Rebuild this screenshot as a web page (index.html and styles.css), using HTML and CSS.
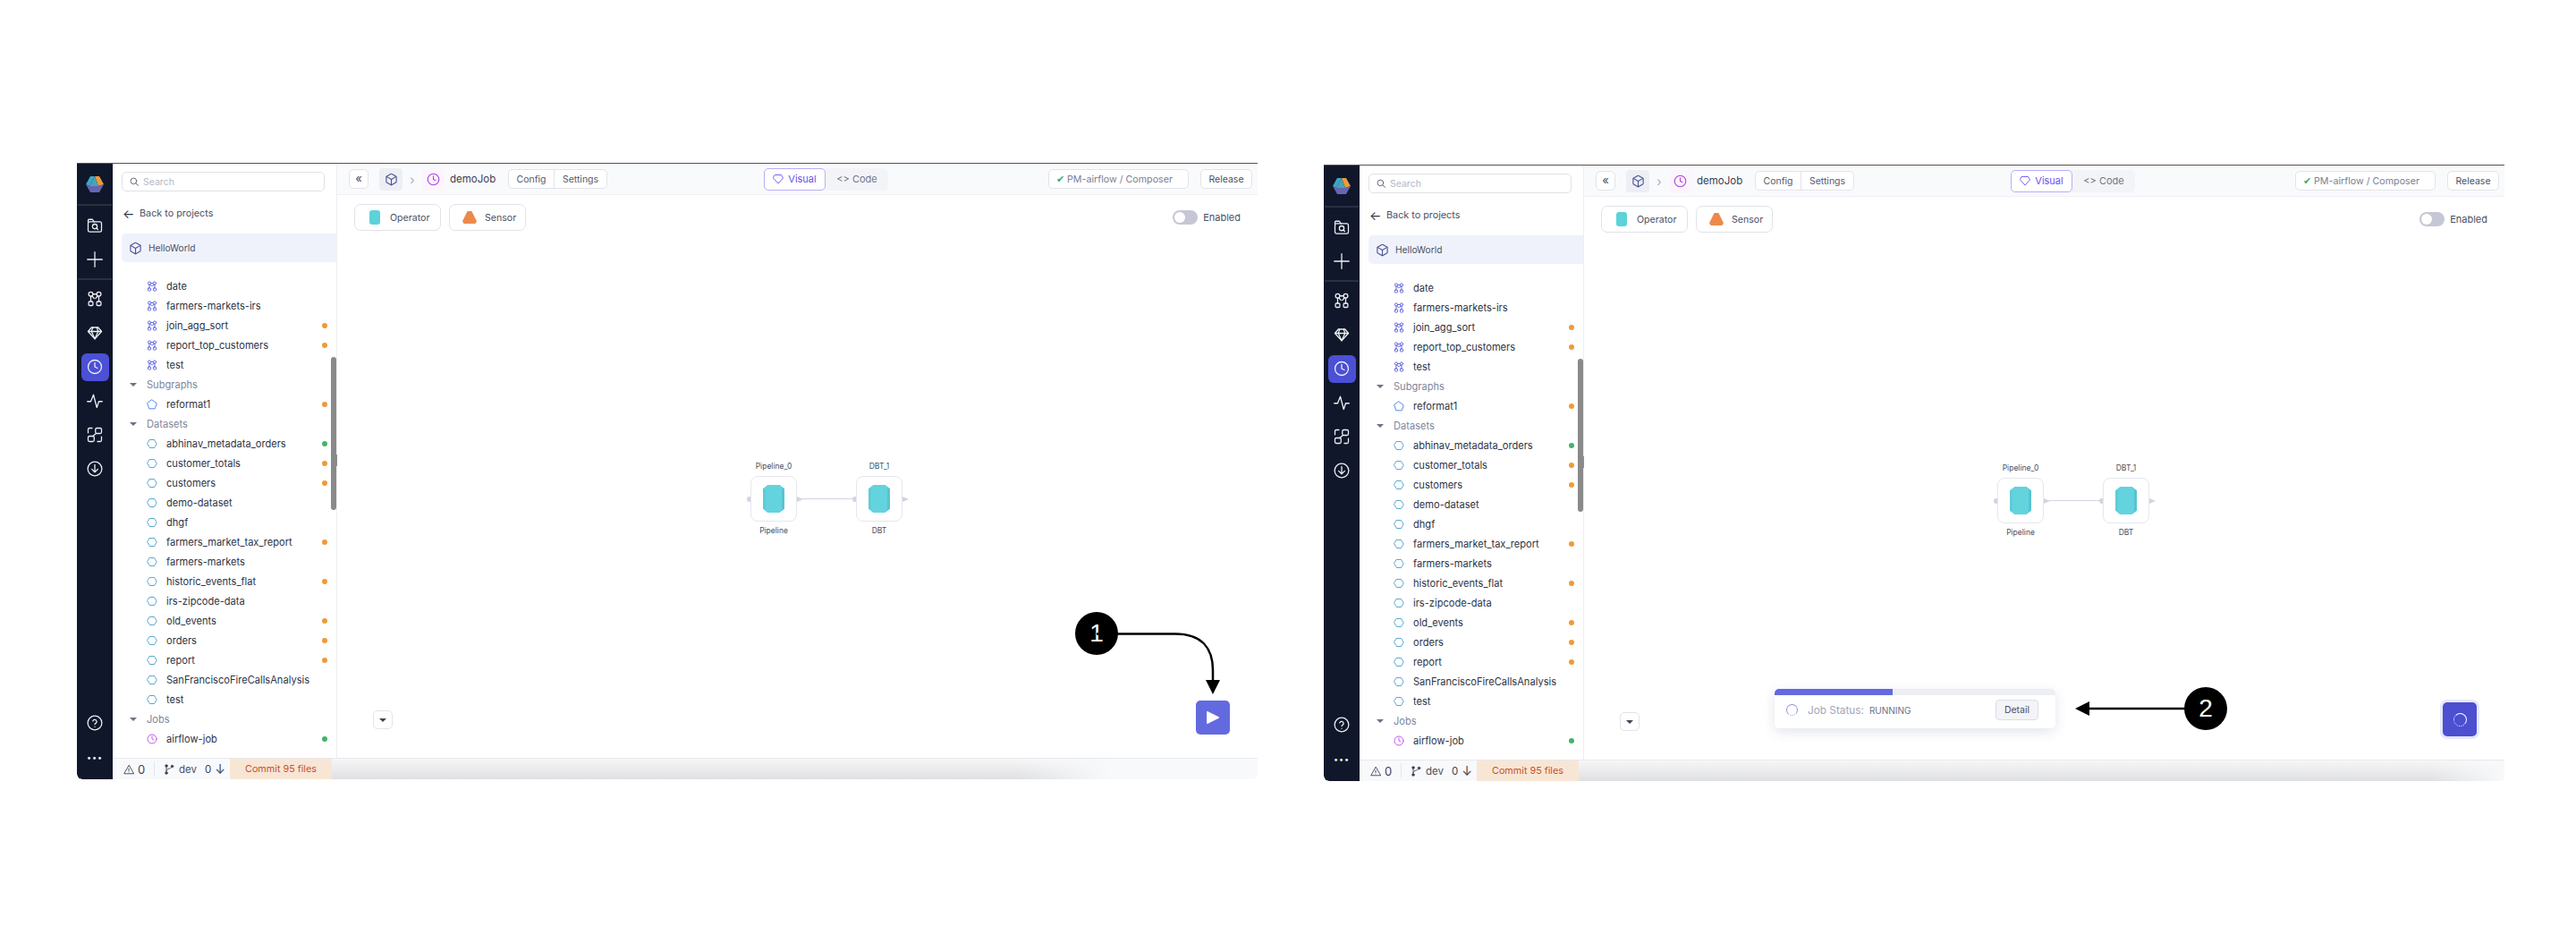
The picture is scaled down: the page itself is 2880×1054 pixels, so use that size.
FILE: index.html
```html
<!DOCTYPE html>
<html lang="en">
<head>
<meta charset="utf-8">
<title>Run job</title>
<link rel="stylesheet" href="styles.css">
</head>
<body>
<svg class="defs" width="0" height="0" aria-hidden="true">
  <symbol id="i-box" viewBox="0 0 24 24"><path d="M21 8a2 2 0 0 0-1-1.73l-7-4a2 2 0 0 0-2 0l-7 4A2 2 0 0 0 3 8v8a2 2 0 0 0 1 1.73l7 4a2 2 0 0 0 2 0l7-4A2 2 0 0 0 21 16Z"/><path d="m3.3 7 8.7 5 8.7-5"/><path d="M12 22V12"/></symbol>
  <symbol id="i-clock" viewBox="0 0 24 24"><circle cx="12" cy="12" r="10"/><path d="M12 6v6l4 2"/></symbol>
  <symbol id="i-pipe" viewBox="0 0 24 24"><circle cx="6" cy="5" r="3.2"/><circle cx="18" cy="5" r="3.2"/><rect x="2.8" y="16" width="6.4" height="6" rx="1.5"/><rect x="14.8" y="16" width="6.4" height="6" rx="1.5"/><path d="M9.2 5h5.6M6 8.2V16M18 8.2V16M8 8l3 3.500M16 8l-3 3.500"/></symbol>
  <symbol id="i-hex" viewBox="0 0 24 24"><path d="M7 3h10l5.500 9-5.500 9H7l-5.500-9z" stroke-linejoin="round"/></symbol>
  <symbol id="i-pent" viewBox="0 0 24 24"><path d="M12 2l10.500 7.600-4 12H5.500l-4-12z" stroke-linejoin="round"/></symbol>
  <symbol id="i-folder" viewBox="0 0 24 24"><path d="M2 7V4.500A1.500 1.500 0 0 1 3.500 3h5l2.500 3.500"/><rect x="2" y="6.500" width="20" height="15" rx="2.500"/><circle cx="12" cy="13.500" r="3.500"/><path d="m14.500 16 2 2"/></symbol>
  <symbol id="i-plus" viewBox="0 0 24 24"><path d="M12 1v22M1 12h22"/></symbol>
  <symbol id="i-gem" viewBox="0 0 24 24"><path d="M7 4h10l5 6-10 11L2 10z"/><path d="M2 10h20M9 4l-2 6 5 11 5-11-2-6"/></symbol>
  <symbol id="i-pulse" viewBox="0 0 24 24"><path d="M1 13h5l4-10 5 19 3-9h5"/></symbol>
  <symbol id="i-trans" viewBox="0 0 24 24"><rect x="13" y="2" width="9" height="8" rx="2"/><rect x="2" y="14" width="9" height="8" rx="2"/><path d="M2 9V4a2 2 0 0 1 2-2h4M22 15v5a2 2 0 0 1-2 2h-4M9 14l5-4"/></symbol>
  <symbol id="i-down" viewBox="0 0 24 24"><circle cx="12" cy="12" r="10.500"/><path d="M12 6v11M7.500 12.500 12 17l4.500-4.500"/></symbol>
  <symbol id="i-help" viewBox="0 0 24 24"><circle cx="12" cy="12" r="10.500"/><path d="M9 9.200a3 3 0 0 1 5.800 1c0 2-2.800 2.500-2.800 3.800"/><path d="M12 17.500h.01"/></symbol>
  <symbol id="i-search" viewBox="0 0 24 24"><circle cx="10.500" cy="10.500" r="8"/><path d="m16.500 16.500 6 6"/></symbol>
  <symbol id="i-warn" viewBox="0 0 24 24"><path d="M12 3 1.500 21.500h21z" stroke-linejoin="round"/><path d="M12 10v5M12 18h.01"/></symbol>
  <symbol id="i-branch" viewBox="0 0 24 24"><circle cx="6" cy="4" r="2.500" fill="currentColor"/><circle cx="6" cy="20" r="2.500" fill="currentColor"/><circle cx="19" cy="5" r="2.500" fill="currentColor"/><path d="M6 4v16M19 5c0 6-13 4-13 10"/></symbol>
  <symbol id="i-logo" viewBox="0 0 20 20"><path d="M5 1h5L4 12 0 10z" fill="#3fa6c8"/><path d="M10 1h5l5 9-6 2z" fill="#ef9a3a"/><path d="M10 1l4 11H4z" fill="#4aa3b5"/><path d="M0 10l4 2h10l6-2-5 9H5z" fill="#6466b4"/></symbol>
</svg>

<section class="window">
  <nav class="rail">
    <div class="rail-logo"><svg class="logo"><use href="#i-logo"/></svg></div>
    <div class="rail-item"><svg class="ico"><use href="#i-folder"/></svg></div>
    <div class="rail-item rail-last"><svg class="ico"><use href="#i-plus"/></svg></div>
    <div class="rail-item"><svg class="ico"><use href="#i-pipe"/></svg></div>
    <div class="rail-item"><svg class="ico"><use href="#i-gem"/></svg></div>
    <div class="rail-item rail-on"><span class="rail-tile"><svg class="ico"><use href="#i-clock"/></svg></span></div>
    <div class="rail-item"><svg class="ico"><use href="#i-pulse"/></svg></div>
    <div class="rail-item"><svg class="ico"><use href="#i-trans"/></svg></div>
    <div class="rail-item"><svg class="ico"><use href="#i-down"/></svg></div>
    <div class="rail-item rail-help"><svg class="ico"><use href="#i-help"/></svg></div>
    <div class="rail-item rail-dots">•••</div>
  </nav>
  <div class="body">
    <div class="work">
      <aside class="panel">
        <div class="search"><svg class="s-ico"><use href="#i-search"/></svg>Search</div>
        <div class="back"><span class="back-arrow">←</span>Back to projects</div>
        <div class="project"><svg class="p-ico"><use href="#i-box"/></svg>HelloWorld</div>
        <div class="tree">
          <div class="row"><svg class="t-ico c-pipe"><use href="#i-pipe"/></svg>date</div>
          <div class="row"><svg class="t-ico c-pipe"><use href="#i-pipe"/></svg>farmers-markets-irs</div>
          <div class="row"><svg class="t-ico c-pipe"><use href="#i-pipe"/></svg>join_agg_sort<i class="dot orange"></i></div>
          <div class="row"><svg class="t-ico c-pipe"><use href="#i-pipe"/></svg>report_top_customers<i class="dot orange"></i></div>
          <div class="row"><svg class="t-ico c-pipe"><use href="#i-pipe"/></svg>test</div>
          <div class="row head"><i class="caret"></i>Subgraphs</div>
          <div class="row"><svg class="t-ico c-sub"><use href="#i-pent"/></svg>reformat1<i class="dot orange"></i></div>
          <div class="row head"><i class="caret"></i>Datasets</div>
          <div class="row"><svg class="t-ico c-data"><use href="#i-hex"/></svg>abhinav_metadata_orders<i class="dot green"></i></div>
          <div class="row"><svg class="t-ico c-data"><use href="#i-hex"/></svg>customer_totals<i class="dot orange"></i></div>
          <div class="row"><svg class="t-ico c-data"><use href="#i-hex"/></svg>customers<i class="dot orange"></i></div>
          <div class="row"><svg class="t-ico c-data"><use href="#i-hex"/></svg>demo-dataset</div>
          <div class="row"><svg class="t-ico c-data"><use href="#i-hex"/></svg>dhgf</div>
          <div class="row"><svg class="t-ico c-data"><use href="#i-hex"/></svg>farmers_market_tax_report<i class="dot orange"></i></div>
          <div class="row"><svg class="t-ico c-data"><use href="#i-hex"/></svg>farmers-markets</div>
          <div class="row"><svg class="t-ico c-data"><use href="#i-hex"/></svg>historic_events_flat<i class="dot orange"></i></div>
          <div class="row"><svg class="t-ico c-data"><use href="#i-hex"/></svg>irs-zipcode-data</div>
          <div class="row"><svg class="t-ico c-data"><use href="#i-hex"/></svg>old_events<i class="dot orange"></i></div>
          <div class="row"><svg class="t-ico c-data"><use href="#i-hex"/></svg>orders<i class="dot orange"></i></div>
          <div class="row"><svg class="t-ico c-data"><use href="#i-hex"/></svg>report<i class="dot orange"></i></div>
          <div class="row"><svg class="t-ico c-data"><use href="#i-hex"/></svg>SanFranciscoFireCallsAnalysis</div>
          <div class="row"><svg class="t-ico c-data"><use href="#i-hex"/></svg>test</div>
          <div class="row head"><i class="caret"></i>Jobs</div>
          <div class="row"><svg class="t-ico c-job"><use href="#i-clock"/></svg>airflow-job<i class="dot green"></i></div>
        </div>
        <div class="scrollbar"></div>
        <div class="splitter"></div>
      </aside>
      <main class="main">
        <header class="topbar">
          <div class="collapse">«</div>
          <div class="tile tile-box"><svg class="tile-ico"><use href="#i-box"/></svg></div>
          <div class="crumb">›</div>
          <div class="tile tile-job"><svg class="tile-ico"><use href="#i-clock"/></svg></div>
          <div class="job-name">demoJob</div>
          <div class="seg"><span class="seg-a">Config</span><span class="seg-b">Settings</span></div>
          <div class="tabs"><span class="tab-on"><svg class="tab-gem" viewBox="0 0 24 24"><path d="M5 3h14l4 7-11 12L1 10z"/></svg>Visual</span><span class="tab-off">&lt;&gt;&nbsp;Code</span></div>
          <div class="fabric"><span class="check">✔</span>PM-airflow / Composer</div>
          <div class="release">Release</div>
        </header>
        <div class="toolbar">
          <div class="tool"><i class="op-ico"></i>Operator</div>
          <div class="tool tool-s"><i class="sn-ico"></i>Sensor</div>
          <div class="enabled"><i class="toggle"></i>Enabled</div>
        </div>
        <div class="node n1"><div class="n-top">Pipeline_0</div><div class="n-box"><i class="gem"></i></div><div class="n-bot">Pipeline</div><i class="port-l"></i><i class="port-r"></i></div>
        <div class="link"></div>
        <div class="node n2"><div class="n-top">DBT_1</div><div class="n-box"><i class="gem"></i></div><div class="n-bot">DBT</div><i class="port-l"></i><i class="port-r"></i></div>
        <div class="drop"><i class="caret dark"></i></div>
        <div class="play"><svg class="play-ico" viewBox="0 0 16 16"><path d="M2 1.500 15 8 2 14.500z" stroke-linejoin="round"/></svg></div>
      </main>
    </div>
    <footer class="footer">
      <div class="f-warn"><svg class="f-ico"><use href="#i-warn"/></svg><span class="f-num">0</span></div>
      <div class="f-git"><svg class="f-ico"><use href="#i-branch"/></svg><span class="f-dev">dev</span><span class="f-zero">0</span><span class="f-arrow">↓</span></div>
      <div class="commit">Commit 95 files</div>
      <div class="f-rest"></div>
    </footer>
  </div>
</section>

<section class="window second">
  <nav class="rail">
    <div class="rail-logo"><svg class="logo"><use href="#i-logo"/></svg></div>
    <div class="rail-item"><svg class="ico"><use href="#i-folder"/></svg></div>
    <div class="rail-item rail-last"><svg class="ico"><use href="#i-plus"/></svg></div>
    <div class="rail-item"><svg class="ico"><use href="#i-pipe"/></svg></div>
    <div class="rail-item"><svg class="ico"><use href="#i-gem"/></svg></div>
    <div class="rail-item rail-on"><span class="rail-tile"><svg class="ico"><use href="#i-clock"/></svg></span></div>
    <div class="rail-item"><svg class="ico"><use href="#i-pulse"/></svg></div>
    <div class="rail-item"><svg class="ico"><use href="#i-trans"/></svg></div>
    <div class="rail-item"><svg class="ico"><use href="#i-down"/></svg></div>
    <div class="rail-item rail-help"><svg class="ico"><use href="#i-help"/></svg></div>
    <div class="rail-item rail-dots">•••</div>
  </nav>
  <div class="body">
    <div class="work">
      <aside class="panel">
        <div class="search"><svg class="s-ico"><use href="#i-search"/></svg>Search</div>
        <div class="back"><span class="back-arrow">←</span>Back to projects</div>
        <div class="project"><svg class="p-ico"><use href="#i-box"/></svg>HelloWorld</div>
        <div class="tree">
          <div class="row"><svg class="t-ico c-pipe"><use href="#i-pipe"/></svg>date</div>
          <div class="row"><svg class="t-ico c-pipe"><use href="#i-pipe"/></svg>farmers-markets-irs</div>
          <div class="row"><svg class="t-ico c-pipe"><use href="#i-pipe"/></svg>join_agg_sort<i class="dot orange"></i></div>
          <div class="row"><svg class="t-ico c-pipe"><use href="#i-pipe"/></svg>report_top_customers<i class="dot orange"></i></div>
          <div class="row"><svg class="t-ico c-pipe"><use href="#i-pipe"/></svg>test</div>
          <div class="row head"><i class="caret"></i>Subgraphs</div>
          <div class="row"><svg class="t-ico c-sub"><use href="#i-pent"/></svg>reformat1<i class="dot orange"></i></div>
          <div class="row head"><i class="caret"></i>Datasets</div>
          <div class="row"><svg class="t-ico c-data"><use href="#i-hex"/></svg>abhinav_metadata_orders<i class="dot green"></i></div>
          <div class="row"><svg class="t-ico c-data"><use href="#i-hex"/></svg>customer_totals<i class="dot orange"></i></div>
          <div class="row"><svg class="t-ico c-data"><use href="#i-hex"/></svg>customers<i class="dot orange"></i></div>
          <div class="row"><svg class="t-ico c-data"><use href="#i-hex"/></svg>demo-dataset</div>
          <div class="row"><svg class="t-ico c-data"><use href="#i-hex"/></svg>dhgf</div>
          <div class="row"><svg class="t-ico c-data"><use href="#i-hex"/></svg>farmers_market_tax_report<i class="dot orange"></i></div>
          <div class="row"><svg class="t-ico c-data"><use href="#i-hex"/></svg>farmers-markets</div>
          <div class="row"><svg class="t-ico c-data"><use href="#i-hex"/></svg>historic_events_flat<i class="dot orange"></i></div>
          <div class="row"><svg class="t-ico c-data"><use href="#i-hex"/></svg>irs-zipcode-data</div>
          <div class="row"><svg class="t-ico c-data"><use href="#i-hex"/></svg>old_events<i class="dot orange"></i></div>
          <div class="row"><svg class="t-ico c-data"><use href="#i-hex"/></svg>orders<i class="dot orange"></i></div>
          <div class="row"><svg class="t-ico c-data"><use href="#i-hex"/></svg>report<i class="dot orange"></i></div>
          <div class="row"><svg class="t-ico c-data"><use href="#i-hex"/></svg>SanFranciscoFireCallsAnalysis</div>
          <div class="row"><svg class="t-ico c-data"><use href="#i-hex"/></svg>test</div>
          <div class="row head"><i class="caret"></i>Jobs</div>
          <div class="row"><svg class="t-ico c-job"><use href="#i-clock"/></svg>airflow-job<i class="dot green"></i></div>
        </div>
        <div class="scrollbar"></div>
        <div class="splitter"></div>
      </aside>
      <main class="main">
        <header class="topbar">
          <div class="collapse">«</div>
          <div class="tile tile-box"><svg class="tile-ico"><use href="#i-box"/></svg></div>
          <div class="crumb">›</div>
          <div class="tile tile-job"><svg class="tile-ico"><use href="#i-clock"/></svg></div>
          <div class="job-name">demoJob</div>
          <div class="seg"><span class="seg-a">Config</span><span class="seg-b">Settings</span></div>
          <div class="tabs"><span class="tab-on"><svg class="tab-gem" viewBox="0 0 24 24"><path d="M5 3h14l4 7-11 12L1 10z"/></svg>Visual</span><span class="tab-off">&lt;&gt;&nbsp;Code</span></div>
          <div class="fabric"><span class="check">✔</span>PM-airflow / Composer</div>
          <div class="release">Release</div>
        </header>
        <div class="toolbar">
          <div class="tool"><i class="op-ico"></i>Operator</div>
          <div class="tool tool-s"><i class="sn-ico"></i>Sensor</div>
          <div class="enabled"><i class="toggle"></i>Enabled</div>
        </div>
        <div class="node n1"><div class="n-top">Pipeline_0</div><div class="n-box"><i class="gem"></i></div><div class="n-bot">Pipeline</div><i class="port-l"></i><i class="port-r"></i></div>
        <div class="link"></div>
        <div class="node n2"><div class="n-top">DBT_1</div><div class="n-box"><i class="gem"></i></div><div class="n-bot">DBT</div><i class="port-l"></i><i class="port-r"></i></div>
        <div class="drop"><i class="caret dark"></i></div>
        <div class="status">
          <div class="progress"><div class="progress-fill"></div></div>
          <div class="status-row"><i class="spin spin-blue"></i><span class="status-k">Job Status:</span><span class="status-v">RUNNING</span><span class="detail">Detail</span></div>
        </div>
        <div class="play running"><i class="spin spin-white"></i></div>
      </main>
    </div>
    <footer class="footer">
      <div class="f-warn"><svg class="f-ico"><use href="#i-warn"/></svg><span class="f-num">0</span></div>
      <div class="f-git"><svg class="f-ico"><use href="#i-branch"/></svg><span class="f-dev">dev</span><span class="f-zero">0</span><span class="f-arrow">↓</span></div>
      <div class="commit">Commit 95 files</div>
      <div class="f-rest full"></div>
    </footer>
  </div>
</section>

<div class="callout c1">1</div>
<svg class="arrow a1" viewBox="0 0 140 72"><path class="arrow-line" d="M0 1.500H88C118 1.500 130 18 130 42V56"/><path d="M122 53h16l-8 16z"/></svg>
<div class="callout c2">2</div>
<svg class="arrow a2" viewBox="0 0 124 18"><path class="arrow-line" d="M124 9H12"/><path d="M16 1v16L0 9z"/></svg>
</body>
</html>
```

FILE: styles.css
```css
* { box-sizing: border-box; }
html, body { margin: 0; height: 1054px; overflow: hidden; background: #fff; }
body {
  position: relative;
  display: flex;
  align-items: flex-start;
  gap: 74px;
  padding: 182px 0 0 86px;
  font-family: Inter, "Liberation Sans", sans-serif;
  font-size: 11px;
  color: #2d3345;
  -webkit-font-smoothing: antialiased;
}
.defs { position: absolute; }
svg { fill: none; stroke: currentColor; stroke-width: 1.8; stroke-linecap: round; stroke-linejoin: round; }
i { font-style: normal; display: block; }

.window {
  flex: none;
  width: 1320px;
  height: 689px;
  display: flex;
  border-top: 1px solid #5c5050;
  border-radius: 0 0 6px 6px;
  overflow: hidden;
}
.second { margin-top: 2px; }

/* Rail */
.rail {
  flex: none;
  width: 40px;
  background: #10172a;
  color: #eef0f4;
  display: flex;
  flex-direction: column;
  border-bottom-left-radius: 6px;
}
.rail-logo { height: 47px; display: flex; align-items: center; justify-content: center; border-bottom: 2px solid #2a3040; margin: 0 1px 3px; }
.logo { width: 20px; height: 20px; stroke: none; }
.logo use { stroke: none; }
.rail-item { height: 38px; flex: none; display: flex; align-items: center; justify-content: center; }
.rail-last { border-bottom: 0; margin-bottom: 6px; position: relative; }
.rail-last::after { content: ""; position: absolute; left: 1px; right: 1px; bottom: -4px; height: 2px; background: #2a3040; }
.ico { width: 18px; height: 18px; stroke-width: 1.7; }
.rail-tile { width: 31px; height: 31px; border-radius: 6px; background: #4b50d6; display: flex; align-items: center; justify-content: center; }
.rail-help { margin-top: auto; }
.rail-dots { font-size: 9px; letter-spacing: 1px; margin-bottom: 6px; }

/* Body */
.body { flex: 1; min-width: 0; display: flex; flex-direction: column; }
.work { flex: 1; min-height: 0; display: flex; }

/* Panel */
.panel {
  position: relative;
  flex: none;
  width: 251px;
  padding: 9px 10px 0 10px;
  background: #fff;
  border-right: 1px solid #eceef2;
}
.search {
  height: 22px;
  margin-right: 3px;
  display: flex;
  align-items: center;
  border: 1px solid #dfe1e8;
  border-radius: 5px;
  padding-left: 8px;
  font-size: 10.500px;
  color: #b4b8c6;
}
.s-ico { width: 10px; height: 10px; color: #555b6e; margin-right: 5px; stroke-width: 2.200; }
.back { height: 22px; margin-top: 13px; display: flex; align-items: center; color: #4a5065; font-size: 10.800px; }
.back-arrow { width: 20px; padding-left: 1px; font-size: 14px; color: #2d3345; }
.project {
  height: 32px;
  margin: 12px -10px 0 0;
  padding-left: 8px;
  display: flex;
  align-items: center;
  background: #f0f2fb;
  border-radius: 5px 0 0 5px;
  color: #4a5065;
  font-size: 10.200px;
}
.p-ico { width: 15px; height: 15px; margin-right: 7px; color: #4c5595; }
.tree { margin-top: 16px; }
.row { height: 22px; padding-left: 28px; display: flex; align-items: center; white-space: nowrap; color: #2d3345; font-size: 11.100px; }
.t-ico { width: 12px; height: 12px; margin-right: 10px; flex: none; stroke-width: 1.900; }
.c-pipe { color: #5b61e0; }
.c-sub { color: #4f82f0; }
.c-data { color: #4fa3cc; }
.c-job { color: #c452e8; }
.dot { width: 6px; height: 6px; border-radius: 50%; margin-left: auto; }
.orange { background: #ef9a3a; }
.green { background: #45b36b; }
.head { padding-left: 9px; color: #80869a; }
.caret { width: 0; height: 0; border-left: 4px solid transparent; border-right: 4px solid transparent; border-top: 4px solid #6b7186; margin-right: 11px; }
.caret.dark { border-top-color: #3f4456; margin: 0; }
.scrollbar { position: absolute; right: 0; top: 216px; width: 6px; height: 171px; border-radius: 3px; background: #8a8a8a; }
.splitter { position: absolute; right: -3px; top: 325px; width: 3px; height: 13px; background: #8c9099; }

/* Main */
.main { position: relative; flex: 1; min-width: 0; background: #fff; }
.topbar {
  height: 35px;
  display: flex;
  align-items: center;
  padding: 0 6px 0 13px;
  background: #f9fafc;
  border-bottom: 1px solid #eef0f4;
  font-size: 10.500px;
}
.collapse { width: 22px; height: 22px; border: 1px solid #e2e4ea; border-radius: 5px; background: #fff; display: flex; align-items: center; justify-content: center; font-size: 13px; line-height: 1; color: #4a5065; padding-bottom: 2px; }
.tile { width: 25px; height: 25px; border-radius: 4px; display: flex; align-items: center; justify-content: center; flex: none; }
.tile-box { margin-left: 12px; width: 26px; background: #edeff4; color: #4c5595; }
.tile-job { background: #fcf5fe; color: #b23fe0; }
.tile-ico { width: 15px; height: 15px; }
.crumb { width: 22px; text-align: center; color: #a9adba; font-size: 14px; }
.job-name { width: 49px; margin-left: 6px; font-size: 11.500px; color: #3a4052; white-space: nowrap; }
.seg { width: 111px; height: 22px; margin-left: 16px; display: flex; border: 1px solid #e2e4ea; border-radius: 5px; background: #fff; color: #555b6e; }
.seg span { display: flex; align-items: center; justify-content: center; }
.seg-a { width: 51px; border-right: 1px solid #e2e4ea; }
.seg-b { flex: 1; }
.tabs { width: 139px; height: 25px; margin-left: 175px; display: flex; background: #f3f4f8; border-radius: 5px; font-size: 11px; }
.tab-on { width: 69px; display: flex; align-items: center; justify-content: center; background: #fff; border: 1px solid #b9aef6; border-radius: 5px; color: #6a4ff0; }
.tab-gem { width: 12px; height: 12px; margin-right: 5px; }
.tab-off { flex: 1; display: flex; align-items: center; justify-content: center; color: #70768a; }
.fabric { width: 157px; height: 22px; margin-left: auto; display: flex; align-items: center; padding-left: 8px; border: 1px solid #e2e4ea; border-radius: 5px; background: #fff; color: #7a8093; font-size: 10.700px; white-space: nowrap; }
.check { color: #3fae6a; margin-right: 3px; font-size: 11px; }
.release { width: 58px; height: 22px; margin-left: 13px; display: flex; align-items: center; justify-content: center; border: 1px solid #e2e4ea; border-radius: 5px; background: #fff; color: #4a5065; font-size: 10.500px; }

.toolbar { display: flex; align-items: center; padding: 10px 19px 0; font-size: 10.600px; }
.tool { width: 97px; height: 30px; display: flex; align-items: center; padding-left: 16px; border: 1px solid #e0e2e9; border-radius: 7px; color: #4a5065; }
.tool-s { width: 86px; margin-left: 9px; padding-left: 14px; }
.op-ico { width: 12px; height: 16px; margin-right: 11px; border-radius: 3px; background: #5cd2da; }
.sn-ico { width: 16px; height: 14px; margin-right: 9px; background: #ec8a4c; clip-path: polygon(35% 0, 65% 0, 100% 80%, 90% 100%, 10% 100%, 0 80%); }
.enabled { margin-left: auto; display: flex; align-items: center; color: #4a5065; font-size: 11px; }
.toggle { position: relative; width: 28px; height: 16px; margin-right: 6px; border-radius: 8px; background: #c5c7d6; }
.toggle::after { content: ""; position: absolute; left: 2px; top: 2px; width: 12px; height: 12px; border-radius: 50%; background: #fff; }

/* Diagram */
.node { position: absolute; top: 349px; width: 52px; height: 51px; font-size: 8.500px; color: #4a5065; }
.n1 { left: 462px; }
.n2 { left: 580px; }
.n-box { width: 52px; height: 51px; border: 1px solid #e6e7ee; border-radius: 8px; background: #fff; display: flex; align-items: center; justify-content: center; }
.gem { width: 24px; height: 31px; background: linear-gradient(90deg, #5fcdd8 0 12%, #63d3de 12% 88%, #58c4d0 88%); clip-path: polygon(22% 0, 78% 0, 100% 14%, 100% 86%, 78% 100%, 22% 100%, 0 86%, 0 14%); }
.n-top, .n-bot { position: absolute; left: -14px; right: -14px; text-align: center; white-space: nowrap; }
.n-top { top: -16px; }
.n-bot { top: 56px; }
.port-l { position: absolute; left: -4px; top: 23px; width: 4px; height: 6px; background: #d3d4e2; border-radius: 3px 0 0 3px; }
.port-r { position: absolute; left: 100%; top: 23px; border-left: 7px solid #d3d4e2; border-top: 3px solid transparent; border-bottom: 3px solid transparent; }
.link { position: absolute; left: 520px; top: 374px; width: 57px; height: 1px; background: #d3d4e2; }
.drop { position: absolute; left: 40px; top: 611px; width: 22px; height: 21px; border: 1px solid #e2e4ea; border-radius: 5px; background: #fff; display: flex; align-items: center; justify-content: center; }
.play { position: absolute; left: 960px; top: 600px; width: 38px; height: 38px; border-radius: 5px; background: #636ae0; display: flex; align-items: center; justify-content: center; }
.play-ico { width: 16px; height: 16px; fill: #fff; stroke: #fff; stroke-width: 1; }
.play.running { background: #4b4fd0; box-shadow: 0 0 0 3px #e5e8fb; }
.spin { display: block; border-radius: 50%; }
.spin-white { width: 15px; height: 15px; border: 1.500px solid #fff; border-left-style: dotted; border-bottom-style: dotted; }
.spin-blue { width: 13px; height: 13px; border: 1.500px solid #8d90e8; border-bottom-style: dotted; }

.status { position: absolute; left: 213px; top: 585px; width: 314px; height: 44px; background: #fff; border-radius: 5px; box-shadow: 0 4px 14px rgba(60, 70, 110, .14); overflow: hidden; }
.progress { height: 7px; background: #eceef3; }
.progress-fill { width: 132px; height: 7px; background: #636ae0; }
.status-row { height: 33px; display: flex; align-items: center; padding-left: 13px; font-size: 10.500px; }
.status-k { margin-left: 11px; color: #a2a6b8; font-size: 11.800px; }
.status-v { margin-left: 6px; color: #6b7186; font-size: 10px; }
.detail { width: 48px; height: 23px; margin-left: auto; margin-right: 19px; display: flex; align-items: center; justify-content: center; background: #f3f4f7; border: 1px solid #dcdee6; border-radius: 4px; color: #4a5065; }

/* Footer */
.footer { flex: none; height: 24px; display: flex; align-items: stretch; background: #f8f9fb; border-top: 1px solid #e8e9ed; color: #3f4456; font-size: 10.800px; }
.footer > div { display: flex; align-items: center; }
.f-ico { width: 12px; height: 12px; flex: none; }
.f-warn { width: 47px; padding-left: 12px; position: relative; }
.f-warn::after { content: ""; position: absolute; right: 0; top: 3px; bottom: 3px; width: 1px; background: #e6e7ec; }
.f-num { margin-left: 4px; font-size: 13px; }
.f-git { width: 84px; padding-left: 10px; }
.f-dev { margin-left: 5px; color: #4a5065; font-size: 11.500px; }
.f-zero { margin-left: 9px; font-size: 11.500px; }
.f-arrow { margin-left: 4px; font-size: 14px; }
.commit { width: 114px; justify-content: center; background: #f8e6d5; color: #c4512d; }
.f-rest { flex: 1; background: linear-gradient(90deg, transparent 0 74%, #f8f9fb 84%), linear-gradient(180deg, #f6f6f7, #dfe0e2); border-bottom-right-radius: 6px; }
.f-rest.full { background: linear-gradient(90deg, transparent 0 92%, #f8f9fb 100%), linear-gradient(180deg, #f6f6f7, #dfe0e2); }

/* Annotations */
.callout { position: absolute; width: 48px; height: 48px; border-radius: 50%; background: #000; color: #fff; display: flex; align-items: center; justify-content: center; font-family: "Liberation Sans", sans-serif; font-size: 28px; }
.c1 { left: 1202px; top: 684px; }
.c2 { left: 2442px; top: 768px; }
.arrow { position: absolute; fill: #000; stroke: none; }
.arrow-line { fill: none; stroke: #000; stroke-width: 2.500; }
.a1 { left: 1226px; top: 707px; width: 140px; height: 72px; }
.a2 { left: 2320px; top: 783px; width: 124px; height: 18px; }
```
